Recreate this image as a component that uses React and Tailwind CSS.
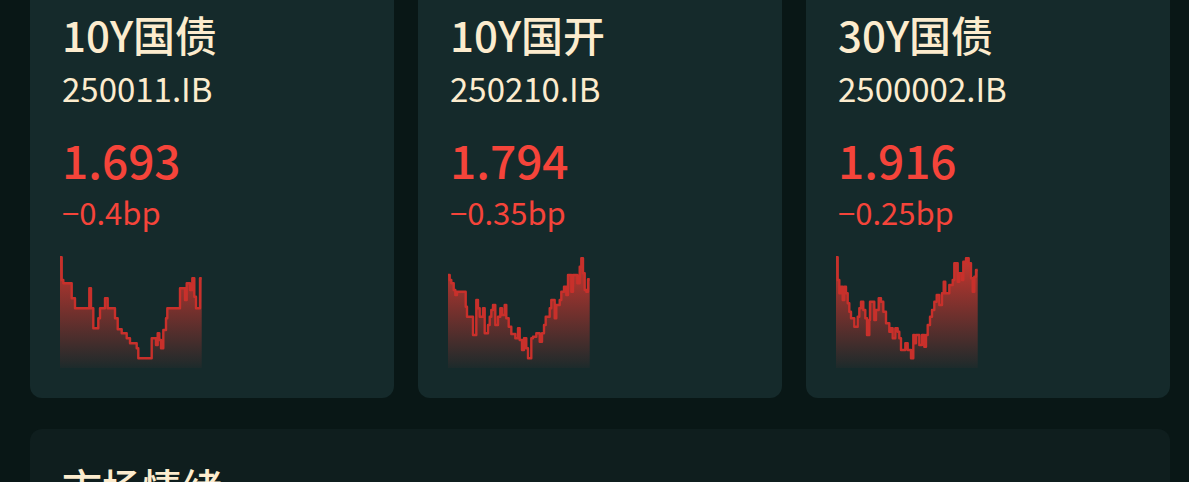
import React from "react";

const C1 = [[90,52],[95,52],[95,120],[100,120],[100,130],[125,130],[125,175],[135,175],[135,205],[178,205],[178,145],[183,145],[183,205],[190,205],[190,265],[205,265],[205,235],[210,235],[210,205],[225,205],[225,175],[233,175],[233,205],[255,205],[255,235],[263,235],[263,268],[275,268],[275,280],[290,280],[290,295],[300,295],[300,310],[320,310],[320,325],[325,325],[325,355],[365,355],[365,295],[378,295],[378,315],[383,315],[383,280],[388,280],[388,300],[393,300],[393,325],[400,325],[400,270],[408,270],[408,235],[412,235],[412,205],[450,205],[450,145],[465,145],[465,180],[470,180],[470,130],[480,130],[480,150],[487,150],[487,115],[493,115],[493,170],[498,170],[498,205],[510,205],[510,115],[515,115]];

const C2 = [[90,105],[95,105],[95,120],[100,120],[100,130],[107,130],[107,150],[112,150],[112,165],[117,165],[117,155],[143,155],[143,200],[147,200],[147,230],[165,230],[165,285],[175,285],[175,180],[180,180],[180,205],[185,205],[185,230],[195,230],[195,205],[200,205],[200,280],[210,280],[210,255],[215,255],[215,230],[220,230],[220,210],[225,210],[225,195],[232,195],[232,255],[240,255],[240,230],[247,230],[247,205],[252,205],[252,225],[260,225],[260,195],[265,195],[265,235],[272,235],[272,260],[280,260],[280,282],[292,282],[292,295],[300,295],[300,265],[305,265],[305,300],[312,300],[312,330],[318,330],[318,295],[325,295],[325,325],[330,325],[330,355],[340,355],[340,295],[345,295],[345,290],[355,290],[355,280],[365,280],[365,305],[372,305],[372,280],[378,280],[378,255],[383,255],[383,230],[395,230],[395,205],[400,205],[400,180],[410,180],[410,235],[415,235],[415,195],[425,195],[425,180],[430,180],[430,155],[438,155],[438,140],[445,140],[445,165],[450,165],[450,105],[460,105],[460,155],[465,155],[465,105],[478,105],[478,130],[485,130],[485,80],[490,80],[490,55],[495,55],[495,100],[500,100],[500,150],[505,150],[505,155],[510,155],[510,118],[515,118]];

const C3 = [[90,52],[95,52],[95,120],[100,120],[100,160],[105,160],[105,140],[110,140],[110,180],[115,180],[115,140],[120,140],[120,160],[125,160],[125,190],[130,190],[130,215],[135,215],[135,235],[145,235],[145,260],[155,260],[155,230],[160,230],[160,205],[165,205],[165,185],[172,185],[172,210],[178,210],[178,235],[183,235],[183,285],[190,285],[190,240],[192,240],[192,185],[205,185],[205,240],[210,240],[210,210],[218,210],[218,175],[225,175],[225,185],[232,185],[232,215],[240,215],[240,250],[250,250],[250,275],[255,275],[255,265],[260,265],[260,295],[268,295],[268,265],[275,265],[275,275],[280,275],[280,295],[285,295],[285,330],[298,330],[298,310],[305,310],[305,330],[315,330],[315,355],[322,355],[322,285],[325,285],[325,310],[330,310],[330,285],[340,285],[340,315],[348,315],[348,285],[355,285],[355,320],[360,320],[360,285],[365,285],[365,255],[372,255],[372,230],[378,230],[378,210],[385,210],[385,185],[392,185],[392,165],[400,165],[400,195],[408,195],[408,160],[413,160],[413,125],[418,125],[418,160],[430,160],[430,135],[440,135],[440,120],[445,120],[445,70],[455,70],[455,125],[460,125],[460,100],[468,100],[468,120],[472,120],[472,65],[480,65],[480,55],[488,55],[488,70],[495,70],[495,115],[500,115],[500,155],[505,155],[505,110],[510,110],[510,90],[515,90]];

function Spark({ data, id }) {
  const pts = data.map(([zx, zy]) => [zx / 3 - 30, zy / 3 - 16]);
  const line = pts.map((p, i) => `${i ? "L" : "M"}${p[0].toFixed(1)} ${p[1].toFixed(1)}`).join(" ");
  const last = pts[pts.length - 1];
  const area = `${line} L${last[0].toFixed(1)} 112 L${pts[0][0].toFixed(1)} 112 Z`;
  return (
    <svg width="142" height="112" viewBox="0 0 142 112" className="block">
      <defs>
        <linearGradient id={id} x1="0" y1="0" x2="0" y2="1">
          <stop offset="0%" stopColor="#d2372f" stopOpacity="0.95" />
          <stop offset="100%" stopColor="#d2372f" stopOpacity="0.04" />
        </linearGradient>
      </defs>
      <path d={area} fill={`url(#${id})`} />
      <path d={line} fill="none" stroke="#c8302b" strokeWidth="2.4" strokeLinejoin="round" />
    </svg>
  );
}

const cards = [
  { name: "10Y国债", code: "250011.IB", price: "1.693", chg: "−0.4bp", data: C1 },
  { name: "10Y国开", code: "250210.IB", price: "1.794", chg: "−0.35bp", data: C2 },
  { name: "30Y国债", code: "2500002.IB", price: "1.916", chg: "−0.25bp", data: C3 },
];

export default function App() {
  return (
    <div
      className="w-[1189px] h-[482px] overflow-hidden bg-[#091716]"
      style={{ fontFamily: '"Noto Sans CJK SC", "Noto Sans", sans-serif' }}
    >
      <div className="pl-[30px] w-[1170px]">
        <div className="grid grid-cols-[364px_364px_364px] gap-6">
          {cards.map((c, i) => (
            <div key={i} className="bg-[#152a2b] rounded-b-xl pl-8 pr-6 pt-[10px] pb-[30px] flex flex-col">
              <div className="text-[42px] leading-[48px] text-[#fcecce] font-medium whitespace-nowrap">{c.name}</div>
              <div className="text-[33px] leading-[40px] text-[#fcecce] mt-[10px] whitespace-nowrap">{c.code}</div>
              <div className="text-[46px] leading-[56px] text-[#f5443a] font-medium mt-[23px] whitespace-nowrap">{c.price}</div>
              <div className="text-[31px] leading-[36px] text-[#f5443a] mt-[7px] whitespace-nowrap">{c.chg}</div>
              <div className="mt-[26px] -ml-[2px]">
                <Spark data={c.data} id={`g${i}`} />
              </div>
            </div>
          ))}
        </div>
        <div className="mt-[31px] bg-[#0f1e1e] rounded-xl h-[200px] px-8 pt-[33px]">
          <div className="text-[40px] leading-[48px] text-[#fcecce] font-medium">市场情绪</div>
        </div>
      </div>
    </div>
  );
}
